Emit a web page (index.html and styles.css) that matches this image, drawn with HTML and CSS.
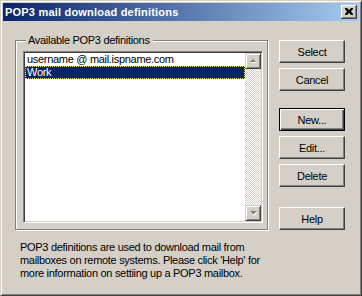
FILE: index.html
```html
<!DOCTYPE html>
<html lang="en">
<head>
  <meta charset="UTF-8">
  <title>POP3 mail download definitions</title>
  <link rel="stylesheet" href="styles.css">
</head>
<body>
<div class="janela">
  <div class="titulo">
    <span class="titulo-texto">POP3 mail download definitions</span>
    <span class="fechar">
      <svg width="8" height="7" viewBox="0 0 8 7"><path d="M0 0h2l2 2 2-2h2v1L6 3.5 8 6v1H6L4 5 2 7H0V6l2-2.5L0 1z" fill="#000"/></svg>
    </span>
  </div>

  <div class="conteudo">
    <div class="coluna">
      <fieldset class="grupo">
        <legend>Available POP3 definitions</legend>
        <div class="lista">
          <div class="itens">
            <div class="item">username @ mail.ispname.com</div>
            <div class="item sel">Work</div>
          </div>
          <div class="rolagem">
            <span class="seta">
              <svg width="7" height="5" viewBox="0 0 7 5"><path d="M4 1l3 3H1z" fill="#fff"/><path d="M3 0l3 3H0z" fill="#808080"/></svg>
            </span>
            <span class="trilha"></span>
            <span class="seta">
              <svg width="7" height="5" viewBox="0 0 7 5"><path d="M1 1h7L4 5z" fill="#fff"/><path d="M0 0h7L3.5 3.5z" fill="#808080"/></svg>
            </span>
          </div>
        </div>
      </fieldset>
      <p class="info">
        POP3 definitions are used to download mail from<br>
        mailboxes on remote systems. Please click 'Help' for<br>
        more information on settiing up a POP3 mailbox.
      </p>
    </div>

    <div class="botoes">
      <button class="botao">Select</button>
      <button class="botao">Cancel</button>
      <button class="botao padrao grupo-novo">New...</button>
      <button class="botao">Edit...</button>
      <button class="botao">Delete</button>
      <button class="botao ajuda">Help</button>
    </div>
  </div>
</div>
</body>
</html>
```

FILE: styles.css
```css
body { margin: 0; background: #d4d0c8; font-family: 'Liberation Sans', Arial, sans-serif; font-size: 11px; color: #000; letter-spacing: -0.3px; }
.janela { width: 362px; height: 296px; box-sizing: border-box; background: #d4d0c8; border: 1px solid; border-color: #d4d0c8 #404040 #404040 #d4d0c8; box-shadow: inset 1px 1px 0 #fff, inset -1px -1px 0 #808080; padding: 2px; }
.titulo { height: 18px; background: linear-gradient(to right, #0a246a, #a6caf0); display: flex; align-items: center; justify-content: space-between; padding: 0 2px 0 2px; }
.titulo-texto { color: #fff; font-weight: bold; font-size: 11px; letter-spacing: 0.2px; }
.fechar { width: 16px; height: 14px; box-sizing: border-box; background: #d4d0c8; box-shadow: inset -1px -1px 0 #404040, inset 1px 1px 0 #fff, inset -2px -2px 0 #808080; display: flex; align-items: center; justify-content: center; padding: 0 1px 1px 0; }
.fechar svg { display: block; }

.conteudo { display: flex; padding: 13px 0 0 12px; }
.coluna { width: 253px; }
.grupo { box-sizing: border-box; width: 253px; height: 196px; margin: 0; padding: 4px 4px 0 7px; border: 1px solid #808080; box-shadow: inset 1px 1px 0 #fff, 1px 1px 0 #fff; }
.grupo legend { padding: 0 3px 0 2px; margin-left: 3px; background: #d4d0c8; line-height: 13px; }

.lista { width: 240px; height: 172px; box-sizing: border-box; background: #fff; display: flex; border: 1px solid; border-color: #808080 #fff #fff #808080; box-shadow: inset 1px 1px 0 #404040, inset -1px -1px 0 #d4d0c8; padding: 1px; }
.itens { flex: 1; }
.item { height: 13px; line-height: 13px; padding-left: 2px; box-sizing: border-box; white-space: nowrap; }
.item.sel { background: #0a246a; color: #fff; border: 1px dotted #ffe38c; line-height: 11px; padding-left: 1px; }
.rolagem { width: 16px; display: flex; flex-direction: column; }
.trilha { flex: 1; background: repeating-conic-gradient(#d4d0c8 0 25%, #fff 0 50%) 0 0 / 2px 2px; }
.seta { height: 16px; box-sizing: border-box; background: #d4d0c8; border: 1px solid; border-color: #d4d0c8 #404040 #404040 #d4d0c8; box-shadow: inset 1px 1px 0 #fff, inset -1px -1px 0 #808080; display: flex; align-items: center; justify-content: center; }
.seta svg { display: block; }

.info { margin: 11px 0 0 5px; line-height: 13px; white-space: nowrap; }

.botoes { display: flex; flex-direction: column; margin-left: 11px; padding-top: 6px; }
.botao { width: 66px; height: 23px; box-sizing: border-box; margin: 0 0 5px 0; padding: 0; font: inherit; letter-spacing: inherit; color: #000; background: #d4d0c8; border: 1px solid; border-color: #fff #404040 #404040 #fff; box-shadow: inset -1px -1px 0 #808080, inset 1px 1px 0 #d4d0c8; }
.padrao { border-color: #000; box-shadow: inset 1px 1px 0 #fff, inset -1px -1px 0 #404040, inset -2px -2px 0 #808080; }
.grupo-novo { margin-top: 12px; }
.ajuda { margin-top: 15px; }
```
